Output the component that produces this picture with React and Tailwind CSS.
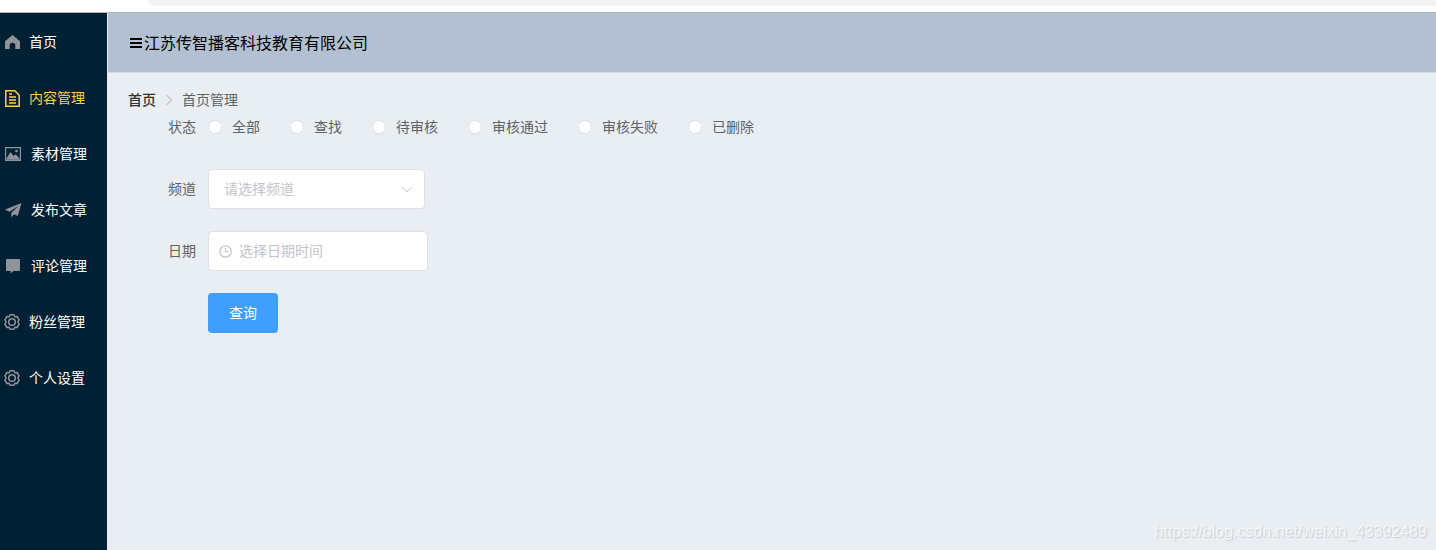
const HomeIcon = () => (
  <svg width="15" height="14" viewBox="0 0 15 14" fill="currentColor">
    <path d="M7.5 0 0 6.2V14h4.7v-3.4a2.8 2.8 0 0 1 5.6 0V14H15V6.2z" />
  </svg>
);

const DocIcon = () => (
  <svg width="15" height="17" viewBox="0 0 15 17" fill="none" stroke="currentColor" strokeWidth="1.5">
    <path d="M.8.8h9l4.4 4.4v11H.8z" />
    <path d="M4 7h7M4 10h7M4 13h7M4 4h3" />
  </svg>
);

const PictureIcon = () => (
  <svg width="16" height="14" viewBox="0 0 16 14" fill="currentColor">
    <path fillRule="evenodd" d="M0 0h16v14H0zM1.2 1.2v11.6h13.6V1.2z" />
    <path d="M1.5 11.5 5.5 5l3.2 4 2-1.8 3.8 4.3v1.3h-13z" />
    <circle cx="11.5" cy="4" r="1.3" />
  </svg>
);

const PlaneIcon = () => (
  <svg width="17" height="15" viewBox="0 0 17 15" fill="currentColor">
    <path d="M16.5 0 0 6.6l4.4 2.1L13.5 3 6.3 9.7v4.8l2.7-3.2 3.7 1.7z" />
  </svg>
);

const CommentIcon = () => (
  <svg width="14" height="15" viewBox="0 0 14 15" fill="currentColor">
    <path d="M1 0h12a1 1 0 0 1 1 1v10a1 1 0 0 1-1 1H7.5L4.6 14.6V12H1a1 1 0 0 1-1-1V1a1 1 0 0 1 1-1z" />
  </svg>
);

const GearIcon = () => (
  <svg width="16" height="16" viewBox="0 0 16 16" fill="none" stroke="currentColor" strokeWidth="1.500" strokeLinejoin="round">
    <path d="M6 .8h4l.9 1.900 2.200-.2 2 3.400L14 7.600v.8l1.100 1.700-2 3.400-2.200-.2-.9 1.900H6l-.9-1.900-2.200.2-2-3.400L2 8.400v-.8L.9 5.900l2-3.400 2.200.2z" />
    <circle cx="8" cy="8" r="3.300" />
  </svg>
);

const ClockIcon = () => (
  <svg width="13" height="13" viewBox="0 0 13 13" fill="none" stroke="currentColor" strokeWidth="1.3">
    <circle cx="6.5" cy="6.5" r="5.7" />
    <path d="M6.5 3v3.7h3" />
  </svg>
);

const SelectArrow = () => (
  <svg width="12" height="7" viewBox="0 0 12 7" fill="none" stroke="currentColor" strokeWidth="1">
    <path d="M1 1 6 6 11 1" />
  </svg>
);

const menu = [
  { label: "首页", icon: <HomeIcon />, gap: "w-[29px]" },
  { label: "内容管理", icon: <DocIcon />, gap: "w-[29px]", active: true },
  { label: "素材管理", icon: <PictureIcon />, gap: "w-[31px]" },
  { label: "发布文章", icon: <PlaneIcon />, gap: "w-[31px]" },
  { label: "评论管理", icon: <CommentIcon />, gap: "w-[31px]" },
  { label: "粉丝管理", icon: <GearIcon />, gap: "w-[29px]" },
  { label: "个人设置", icon: <GearIcon />, gap: "w-[29px]" },
];

const statuses = ["全部", "查找", "待审核", "审核通过", "审核失败", "已删除"];

const FormRow = ({ label, children }) => (
  <div className="mb-[22px] flex h-10 items-center">
    <label className="mb-[2px] w-20 pr-3 text-right text-[#606266]">{label}</label>
    {children}
  </div>
);

const App = () => {
  return (
    <div className="relative flex h-[550px] flex-col overflow-hidden bg-white font-['Noto_Sans_CJK_SC',sans-serif] text-sm">
      <div className="h-[13px] shrink-0 border-b border-[#b5b5b5] bg-white pl-[54px]">
        <div className="ml-[94px] h-1.5 rounded-bl-md bg-[#f1f3f5]" />
      </div>

      <div className="flex min-h-0 flex-1">
        <aside className="w-[107px] shrink-0 bg-[#002033] pt-px">
          {menu.map((item) => (
            <div
              key={item.label}
              className={`flex h-14 items-center ${item.active ? "text-[#ffd04b]" : "text-white"}`}
            >
              <span
                className={`${item.gap} flex shrink-0 justify-center pr-[5px] ${item.active ? "text-[#ffd04b]" : "text-[#909399]"}`}
              >
                {item.icon}
              </span>
              <span className="mb-[2px]">{item.label}</span>
            </div>
          ))}
        </aside>

        <main className="flex-1 bg-[#e9eef3]">
          <header className="ml-px flex h-[60px] items-center border-b border-[#d3d9e0] bg-[#b3c0d1] pl-[22px] text-base text-black">
            <span className="flex w-[14px] flex-col gap-[2px]">
              <span className="h-[2px] w-3 bg-black" />
              <span className="h-[2px] w-3 bg-black" />
              <span className="h-[2px] w-3 bg-black" />
            </span>
            <span className="mb-[2px]">江苏传智播客科技教育有限公司</span>
          </header>

          <div className="pl-[21px] pr-5 pt-5">
            <div className="flex h-3.5 items-center">
              <span className="mb-[2px] font-medium text-[#303133]">首页</span>
              <svg className="mx-[9px] text-[#c0c4cc]" width="8" height="12" viewBox="0 0 8 12" fill="none" stroke="currentColor" strokeWidth="1.1">
                <path d="M1.500 1 6.500 6 1.500 11" />
              </svg>
              <span className="mb-[2px] text-[#606266]">首页管理</span>
            </div>

            <FormRow label="状态">
              <div className="flex items-center">
                {statuses.map((status) => (
                  <div key={status} className="mr-[30px] flex items-center text-[#606266]">
                    <span className="h-3.5 w-3.5 rounded-full border border-[#dcdfe6] bg-white" />
                    <span className="mb-[2px] pl-2.5">{status}</span>
                  </div>
                ))}
              </div>
            </FormRow>

            <FormRow label="频道">
              <div className="flex h-10 w-[217px] items-center justify-between rounded border border-[#dcdfe6] bg-white pl-[15px] pr-[11px] text-[#c0c4cc]">
                <span className="mb-[2px]">请选择频道</span>
                <SelectArrow />
              </div>
            </FormRow>

            <FormRow label="日期">
              <div className="flex h-10 w-[220px] items-center rounded border border-[#dcdfe6] bg-white pl-[10px] text-[#c0c4cc]">
                <ClockIcon />
                <span className="mb-[2px] pl-[7px]">选择日期时间</span>
              </div>
            </FormRow>

            <div className="pl-20">
              <button className="h-10 w-[70px] rounded bg-[#409eff] pb-[2px] text-white">查询</button>
            </div>
          </div>
        </main>
      </div>

      <span className="absolute bottom-[6px] right-[9px] font-['Liberation_Sans',sans-serif] text-base text-white/70 [text-shadow:1px_1px_1px_rgba(90,100,110,0.25)]">
        https://blog.csdn.net/weixin_43392489
      </span>
    </div>
  );
};

export default App;
